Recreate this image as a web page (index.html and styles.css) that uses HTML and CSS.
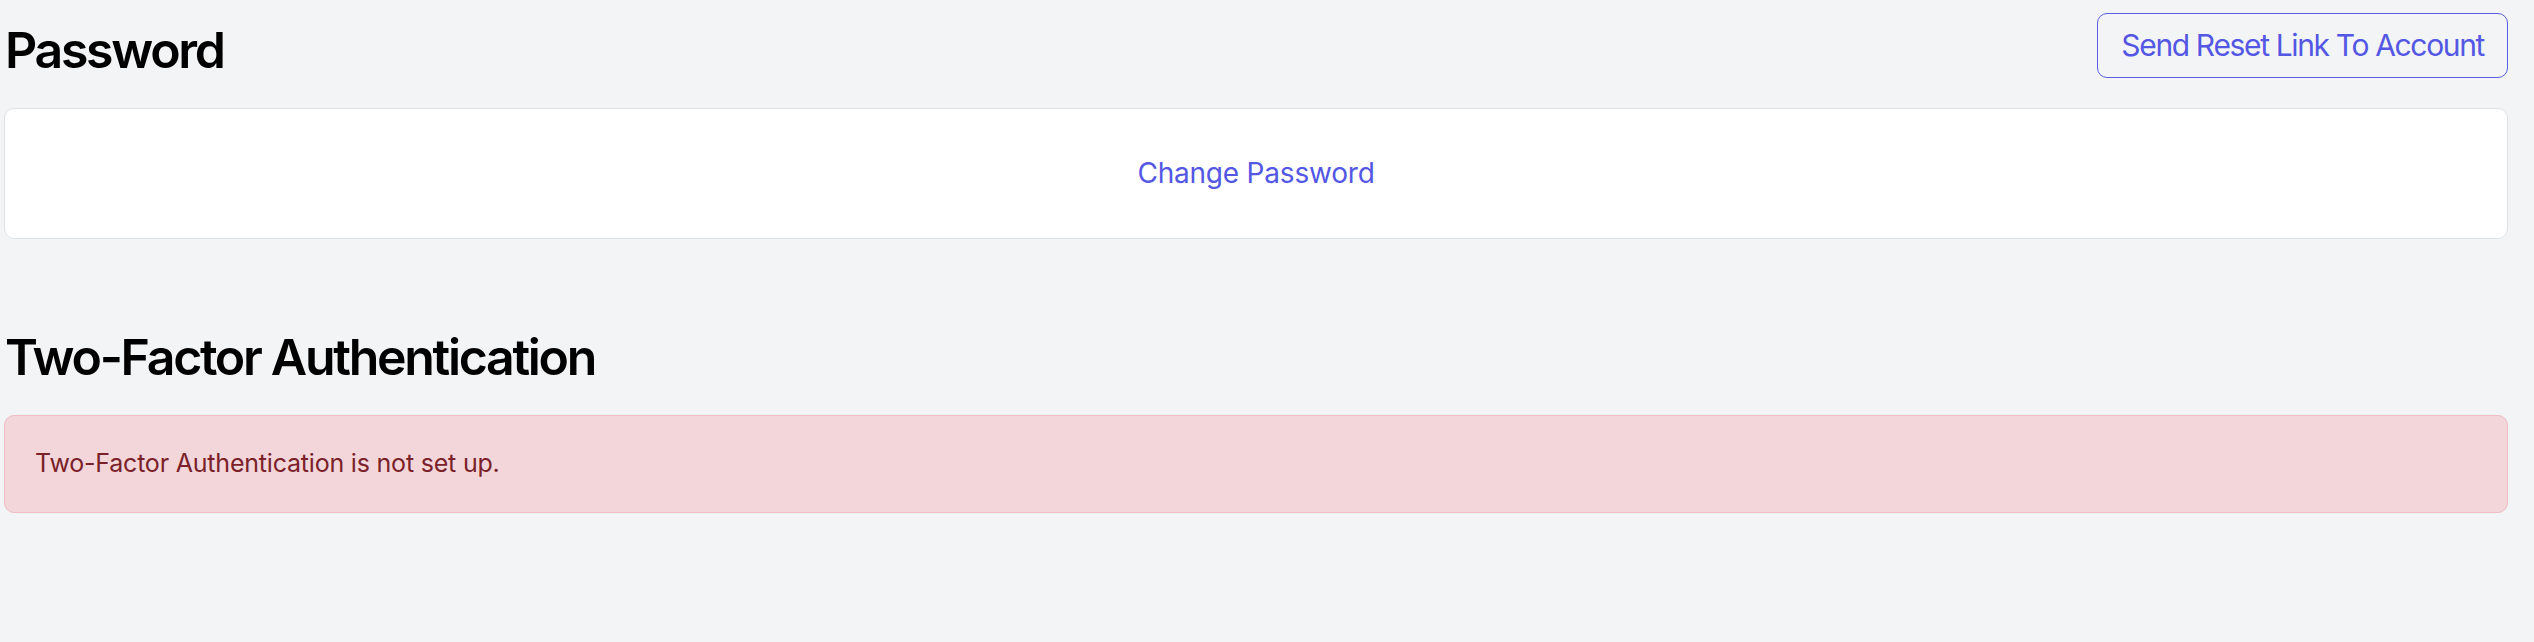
FILE: index.html
```html
<!DOCTYPE html>
<html lang="en">
<head>
<meta charset="utf-8">
<title>Password</title>
<link rel="stylesheet" href="styles.css">
</head>
<body>
<main class="page">
  <section class="section">
    <div class="section-header">
      <h1 class="section-title">Password</h1>
      <button class="btn-outline" type="button">Send Reset Link To Account</button>
    </div>
    <div class="card">
      <a class="card-link" href="#">Change Password</a>
    </div>
  </section>
  <section class="section section-2fa">
    <h2 class="section-title title-2fa">Two-Factor Authentication</h2>
    <div class="alert">Two-Factor Authentication is not set up.</div>
  </section>
</main>
</body>
</html>
```

FILE: styles.css
```css
* { box-sizing: border-box; }
html, body {
  margin: 0;
  padding: 0;
  background: #f3f4f6;
  height: 100%;
}
body {
  font-family: Inter, "Noto Sans", "Liberation Sans", sans-serif;
  color: #000;
}
.page {
  padding: 13px 26px 0 4px;
}
.section-header {
  display: flex;
  justify-content: space-between;
  align-items: flex-start;
  margin-bottom: 27px;
}
.section-title {
  margin: 7px 0 0 1px;
  font-size: 50px;
  line-height: 61px;
  font-weight: 600;
  letter-spacing: -2.3px;
}
.btn-outline {
  font-family: inherit;
  font-size: 30px;
  line-height: 37px;
  font-weight: 400;
  letter-spacing: -1.35px;
  color: #5357e3;
  background: transparent;
  border: 1.5px solid #5a5ee6;
  border-radius: 10px;
  padding: 13px 23px;
  cursor: pointer;
}
.card {
  background: #fff;
  border: 1px solid #dfe2e7;
  border-radius: 10px;
  padding: 48px 0;
  text-align: center;
}
.card-link {
  font-size: 28px;
  line-height: 33px;
  letter-spacing: -0.2px;
  color: #5357e3;
  text-decoration: none;
}
.section-2fa {
  margin-top: 88px;
}
.title-2fa {
  margin: 0 0 27px 1px;
}
.alert {
  background: #f3d6da;
  border: 1px solid #efbfc5;
  border-radius: 10px;
  padding: 29px 25px 29px 30px;
  font-size: 25px;
  line-height: 37.5px;
  letter-spacing: -0.2px;
  color: #7a2129;
}
```
